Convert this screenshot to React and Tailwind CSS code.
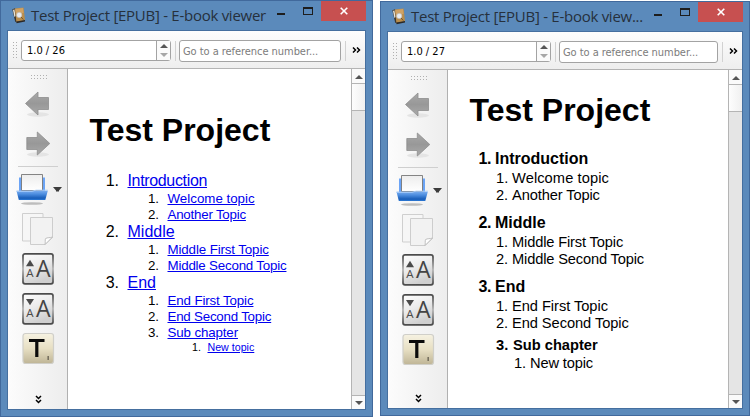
import React from "react";

function BookIcon() {
  return (
    <svg width="14" height="17" viewBox="0 0 14 17" className="shrink-0">
      <path d="M0.3 2.2 L3 1.2 L6 15.4 L3.2 14.8 Z" fill="#3a3630" />
      <path d="M1 3 L2.4 2.2 L3.6 9 L2.4 10 Z" fill="#e8e4da" />
      <path d="M2.8 1.6 L11.6 0.6 L13 13.2 L4.4 15 Z" fill="#b98d4c" />
      <path d="M3.4 2 L11 1 L11.6 6 L4 7 Z" fill="#cfa265" />
      <path d="M4.2 14.6 L13 13 L13 14.4 L4.6 16.2 Z" fill="#2c2926" />
      <circle cx="7.2" cy="8" r="2.7" fill="#e9edf2" stroke="#b8b4ab" strokeWidth="0.6" />
      <path d="M9 10 L11.4 12.6" stroke="#76572b" strokeWidth="1" />
    </svg>
  );
}

function Slot({ children }) {
  return (
    <svg width="59" height="40" viewBox="0 0 59 40" className="block shrink-0">
      {children}
    </svg>
  );
}

function ArrowIcon({ forward }) {
  return (
    <Slot>
      <ellipse cx="30" cy="30.5" rx="11" ry="2.2" fill="#e4e4e4" />
      <path
        d="M17.5 19.5 L30 8 V13.5 H40.5 V25.5 H30 V31 Z"
        transform={forward ? "translate(59.3 0) scale(-1 1)" : undefined}
        fill="url(#arrowFill)"
        stroke="#8e8e8e"
        strokeWidth="0.8"
      />
    </Slot>
  );
}

function PrintIcon() {
  return (
    <Slot>
      <ellipse cx="24" cy="34.5" rx="11" ry="1.3" fill="#bdbdbd" />
      <path d="M11 8.5 H37 V24 H11 Z" fill="#6ba4f6" />
      <path d="M13.5 5.5 H34.5 V21.5 H13.5 Z" fill="url(#paperFill)" stroke="#777" strokeWidth="0.9" />
      <path d="M8.5 21.8 H39.8 L37.3 31 H10.8 Z" fill="url(#blueFill)" />
      <path d="M8.5 22.3 H24 L28 21.2 H39.8" stroke="#a9cdfa" fill="none" />
      <path d="M45 18 H54 L51 21.5 V22.5 H48 V21.5 Z" fill="#3c3c3c" />
    </Slot>
  );
}

function CopyIcon() {
  return (
    <Slot>
      <path d="M14.5 4.5 H35 V32 H14.5 Z" fill="#f6f6f6" stroke="#cfcfcf" />
      <path d="M22.5 8.5 H44.5 V28.5 L37 35.5 H22.5 Z" fill="#f2f2f2" stroke="#cdcdcd" />
      <path d="M37 35.5 C37.6 33.5 36.8 31 37.6 29.5 C39.5 28.3 42 29 44.5 28 Z" fill="#fff" stroke="#c0c0c0" />
    </Slot>
  );
}

function FontSizeIcon({ smaller }) {
  return (
    <Slot>
      <rect x="15" y="4.8" width="30" height="30" rx="2" fill="url(#btnFill)" stroke="url(#btnEdge)" strokeWidth="1.8" />
      <path d={smaller ? "M18 10 H26 L22 16.3 Z" : "M18 17.3 H26 L22 10.7 Z"} fill="#4a4a4a" />
      <text x="22" y="28.2" textAnchor="middle" className="fill-[#4a4a4a] font-['Open_Sans',sans-serif] text-[11.5px]">A</text>
      <text x="35.3" y="28.2" textAnchor="middle" className="fill-[#444] font-['Open_Sans',sans-serif] text-[23px]">A</text>
    </Slot>
  );
}

function TileIcon() {
  return (
    <Slot>
      <rect x="15" y="4.5" width="30.5" height="30" rx="2.5" fill="url(#tileFill)" stroke="#d0cfc9" strokeWidth="1.2" />
      <path d="M21 10 H36.5 V13 H30.4 V28 H27.2 V13 H21 Z" fill="#0b0b0b" />
      <path d="M40.2 27 V31" stroke="#77715f" strokeWidth="1.6" />
    </Slot>
  );
}

function Gradients() {
  const stops = (id, list, angled) => (
    <linearGradient id={id} x1="0" y1="0" x2={angled ? 0.4 : 0} y2="1">
      {list.map(([offset, color]) => (
        <stop key={offset} offset={offset} stopColor={color} />
      ))}
    </linearGradient>
  );
  return (
    <svg width="0" height="0" className="absolute">
      <defs>
        {stops("arrowFill", [[0, "#a9a9a9"], [0.5, "#989898"], [1, "#aaaaaa"]])}
        {stops("paperFill", [[0, "#ededed"], [1, "#ffffff"]])}
        {stops("blueFill", [[0, "#78abed"], [0.35, "#4d8ee0"], [0.8, "#185db8"], [1, "#2d7ad6"]])}
        {stops("btnFill", [[0, "#fdfdfd"], [0.5, "#ececec"], [1, "#cfcfcf"]], true)}
        {stops("btnEdge", [[0, "#4b4b4b"], [0.5, "#b5b5b5"], [1, "#4b4b4b"]])}
        {stops("tileFill", [[0, "#f6f2e2"], [0.5, "#e7dfc3"], [1, "#bfb596"]])}
      </defs>
    </svg>
  );
}

function Dots({ cols, rows }) {
  return (
    <svg width={cols * 3} height={rows * 3} className="block shrink-0" shapeRendering="crispEdges">
      {Array.from({ length: cols * rows }, (_, i) => (
        <rect key={i} x={(i % cols) * 3} y={Math.floor(i / cols) * 3} width="1" height="1" fill="#b0b0b0" />
      ))}
    </svg>
  );
}

function Chevrons({ down }) {
  return (
    <svg width="9" height="9" viewBox="0 0 9 9" className="block shrink-0">
      <path
        d="M1 1.5 L3.5 4 L1 6.5 M5 1.5 L7.5 4 L5 6.5"
        transform={down ? "translate(8.5 0) rotate(90)" : undefined}
        fill="none"
        stroke="#000"
        strokeWidth="1.5"
      />
    </svg>
  );
}

function Triangle({ down, light }) {
  return (
    <svg width="8" height="4" viewBox="0 0 8 4" className="block shrink-0">
      <path d={down ? "M0 0 H8 L4 4 Z" : "M0 4 H8 L4 0 Z"} fill={light ? "#a6a6a6" : "#555"} />
    </svg>
  );
}

function TitleBar({ title }) {
  return (
    <div className="flex h-[30px] items-start pl-[11px] pr-[6px]">
      <div className="pt-[6px]"><BookIcon /></div>
      <div className="ml-[5px] w-0 flex-1 whitespace-nowrap pt-[3px] font-['Open_Sans',sans-serif] text-[15px] leading-[22px] tracking-[-0.27px] text-[#26303c]">
        {title}
      </div>
      <svg width="44" height="20" className="block shrink-0" shapeRendering="crispEdges">
        <rect x="0" y="12" width="8" height="2" fill="#1d1d1d" />
        <path d="M26 6 H36 V14 H26 Z M27 8 V13 H35 V8 Z" fill="#1d1d1d" fillRule="evenodd" />
      </svg>
      <div className="flex h-5 w-[45px] shrink-0 items-center justify-center bg-[#c75050]">
        <svg width="8" height="8" viewBox="0 0 8 8">
          <path d="M0.7 0.7 L7.3 7.3 M7.3 0.7 L0.7 7.3" stroke="#fff" strokeWidth="1.6" />
        </svg>
      </div>
    </div>
  );
}

function Toolbar({ page }) {
  return (
    <div className="flex h-[38px] shrink-0 items-center border-b border-[#b4b4b4] bg-gradient-to-b from-[#fdfdfd] to-[#eeeeee] pl-[5px] pt-[2px] font-['DejaVu_Sans_Condensed','DejaVu_Sans',sans-serif] text-[11px]">
      <Dots cols={2} rows={6} />
      <div className="ml-[2px] flex h-[21px] w-[150px] shrink-0 rounded-[3px] border border-[#a3a3a3] bg-white">
        <div className="flex-1 pl-[5px] leading-[20px] text-black">{page}</div>
        <div className="flex w-[14px] flex-col items-center justify-center gap-[5px] border-l border-[#a3a3a3] bg-[#fafafa]">
          <Triangle />
          <Triangle down light />
        </div>
      </div>
      <div className="ml-1 h-5 w-px bg-[#d2d2d2]" />
      <div className="ml-[3px] h-[22px] flex-1 whitespace-nowrap rounded-[3px] border border-[#a3a3a3] bg-white pl-[3px] leading-[21px] tracking-[-0.05px] text-[#7c7c7c]">
        Go to a reference number...
      </div>
      <div className="ml-1 mr-[6px] h-5 w-px bg-[#d2d2d2]" />
      <Chevrons />
      <div className="w-1" />
    </div>
  );
}

function Sidebar() {
  return (
    <div className="flex w-[60px] shrink-0 flex-col border-r border-[#b0b0b0] bg-gradient-to-r from-[#fcfcfc] to-[#ededed]">
      <div className="h-[15px] shrink-0 pl-[23px] pt-[6px]"><Dots cols={6} rows={2} /></div>
      <ArrowIcon />
      <ArrowIcon forward />
      <div className="h-[5px] shrink-0 pl-[10px] pt-[2px]"><div className="h-px w-10 bg-[#cfcfcf]" /></div>
      <PrintIcon />
      <CopyIcon />
      <FontSizeIcon />
      <FontSizeIcon smaller />
      <TileIcon />
      <div className="mt-auto pb-[5px] pl-[26px]"><Chevrons down /></div>
    </div>
  );
}

function Scrollbar() {
  return (
    <div className="flex w-[14px] shrink-0 flex-col border-l border-[#b4b4b4] bg-[#e5e5e5]">
      <div className="flex h-[15px] items-center justify-center border-b border-[#b4b4b4] bg-[#fafafa] pt-px"><Triangle /></div>
      <div className="h-[27px] border-b border-[#b4b4b4] bg-gradient-to-r from-[#fdfdfd] to-[#f0f0f0]" />
      <div className="flex-1" />
      <div className="flex h-[14px] items-center justify-center border-t border-[#b4b4b4] bg-[#fafafa]"><Triangle down /></div>
    </div>
  );
}

function ViewerWindow({ title, page, className, children }) {
  return (
    <div className={`flex shrink-0 flex-col border border-[#41699c] bg-[#5b8abb] ${className}`}>
      <TitleBar title={title} />
      <div className="mx-[6px] mb-[6px] -mt-px flex flex-1 flex-col border border-[#456f9f] bg-white">
        <Toolbar page={page} />
        <div className="flex flex-1">
          <Sidebar />
          <div className="flex-1 font-['Liberation_Sans',Arial,sans-serif] text-black">{children}</div>
          <Scrollbar />
        </div>
      </div>
    </div>
  );
}

const linkStyles = {
  1: { row: "-mt-px h-[20px] leading-[19px] text-[16px]", num: "w-[51px]", gap: "w-[8.5px]" },
  2: { row: "h-[16px] leading-[16px] text-[13.33px]", num: "w-[91px]", gap: "w-[8.5px]" },
  3: { row: "h-[13px] leading-[13px] text-[10.67px]", num: "w-[133px]", gap: "w-[6.5px]" },
};

const links = [
  [1, "1.", "Introduction", "tracking-[-0.34px]"],
  [2, "1.", "Welcome topic", ""],
  [2, "2.", "Another Topic", "tracking-[-0.22px]"],
  [1, "2.", "Middle", ""],
  [2, "1.", "Middle First Topic", "tracking-[-0.12px]"],
  [2, "2.", "Middle Second Topic", "tracking-[-0.2px]"],
  [1, "3.", "End", ""],
  [2, "1.", "End First Topic", "tracking-[-0.13px]"],
  [2, "2.", "End Second Topic", "tracking-[-0.22px]"],
  [2, "3.", "Sub chapter", "tracking-[-0.13px]"],
  [3, "1.", "New topic", ""],
];

const outlineStyles = {
  1: { row: "h-[22px] leading-[21px] text-[16px] font-bold pl-[30.5px]", num: "w-[16.5px] tracking-[-0.3px]" },
  2: { row: "h-[17px] leading-[17px] text-[14.67px] pl-[48px]", num: "w-[16px]" },
  s: { row: "h-[20px] leading-[20px] text-[14.67px] font-bold pl-[48px] mt-[3px]", num: "w-[17px]" },
  3: { row: "h-[17px] leading-[17px] text-[14.67px] pl-[66px]", num: "w-[16px]" },
};

const outline = [
  [1, "1.", "Introduction", ""],
  [2, "1.", "Welcome topic", "tracking-[0.08px]"],
  [2, "2.", "Another Topic", "tracking-[-0.12px]"],
  [1, "2.", "Middle", "mt-[8px]"],
  [2, "1.", "Middle First Topic", "tracking-[-0.15px]"],
  [2, "2.", "Middle Second Topic", "tracking-[-0.16px]"],
  [1, "3.", "End", "mt-[8px]"],
  [2, "1.", "End First Topic", "tracking-[-0.05px]"],
  [2, "2.", "End Second Topic", "tracking-[-0.07px]"],
  ["s", "3.", "Sub chapter", ""],
  [3, "1.", "New topic", "tracking-[-0.15px]"],
];

export default function App() {
  return (
    <div className="flex h-[417px] w-[750px] items-start gap-[7px] overflow-hidden bg-white">
      <Gradients />
      <ViewerWindow
        title="Test Project [EPUB] - E-book viewer"
        page="1.0 / 26"
        className="h-[417px] w-[373px]"
      >
        <h1 className="pl-[21.5px] pt-[43px] text-[32px] font-bold leading-[37px]">Test Project</h1>
        <div className="pt-[23px]">
          {links.map(([level, num, text, extra], i) => (
            <div key={i} className={`flex whitespace-nowrap ${linkStyles[level].row}`}>
              <span className={`text-right ${linkStyles[level].num}`}>{num}</span>
              <span className={linkStyles[level].gap} />
              <span className={`text-[#0000ee] underline ${extra}`}>{text}</span>
            </div>
          ))}
        </div>
      </ViewerWindow>
      <ViewerWindow
        title="Test Project [EPUB] - E-book view..."
        page="1.0 / 27"
        className="mt-px h-[415px] w-[370px]"
      >
        <h1 className="pl-[21.5px] pt-[22px] text-[32px] font-bold leading-[37px]">Test Project</h1>
        <div className="pt-[19px]">
          {outline.map(([level, num, text, extra], i) => (
            <div key={i} className={`flex whitespace-nowrap ${outlineStyles[level].row} ${extra}`}>
              <span className={outlineStyles[level].num}>{num}</span>
              <span>{text}</span>
            </div>
          ))}
        </div>
      </ViewerWindow>
    </div>
  );
}
